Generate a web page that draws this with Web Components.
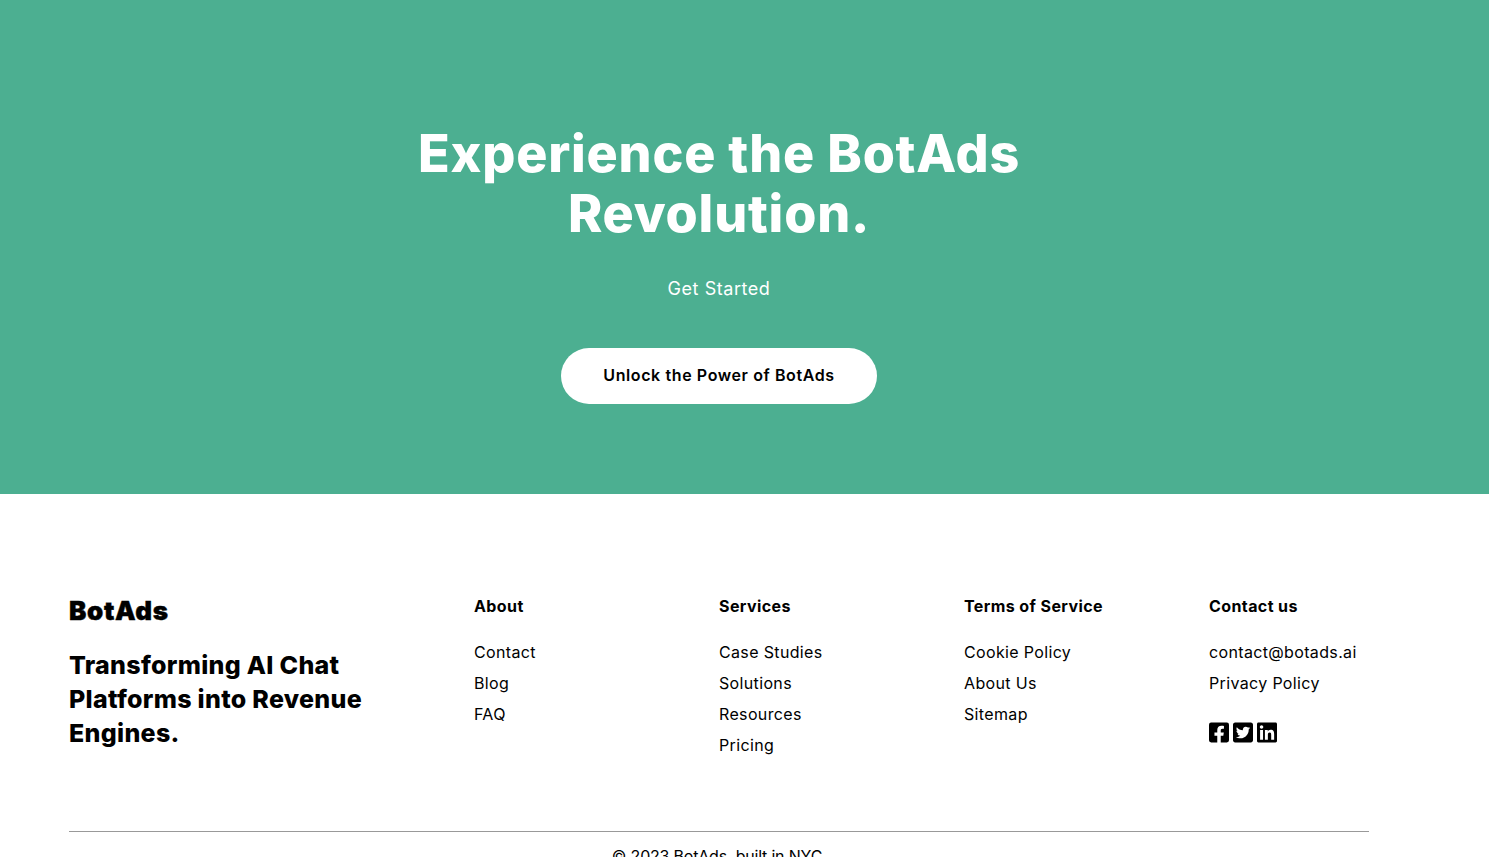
<!DOCTYPE html>
<html>
<head>
<meta charset="utf-8">
<title>BotAds</title>
<style>
html,body{margin:0;padding:0;background:#fff}
body{font-family:Inter,"Liberation Sans",sans-serif;color:#000}
footer-column a{display:block;height:31px;line-height:31px;color:#000;text-decoration:none;letter-spacing:.35px}
</style>
</head>
<body>
<bot-hero heading="Experience the BotAds Revolution." sub="Get Started" cta="Unlock the Power of BotAds"></bot-hero>
<bot-footer>
  <footer-column title="About">
    <a>Contact</a><a>Blog</a><a>FAQ</a>
  </footer-column>
  <footer-column title="Services">
    <a>Case Studies</a><a>Solutions</a><a>Resources</a><a>Pricing</a>
  </footer-column>
  <footer-column title="Terms of Service">
    <a>Cookie Policy</a><a>About Us</a><a>Sitemap</a>
  </footer-column>
  <footer-column title="Contact us">
    <a>contact@botads.ai</a><a>Privacy Policy</a>
    <social-icons></social-icons>
  </footer-column>
</bot-footer>
<script>
const heroTemplate = document.createElement('template');
heroTemplate.innerHTML = `
  <style>
  :host{display:block;background:#4caf91;color:#fff;padding:124px 0 90px;text-align:center}
  .inner{width:1300px;margin-left:69px}
  h1{margin:0 auto;width:700px;font-size:52px;line-height:60px;font-weight:800;letter-spacing:.8px}
  p{margin:33px 0 0;font-size:18px;line-height:24px;letter-spacing:.55px}
  button{display:block;margin:47px auto 0;width:316px;height:56px;border:0;border-radius:28px;background:#fff;color:#000;font:600 16px Inter,sans-serif;letter-spacing:.6px;padding:0 0 2px}
  </style>
  <div class="inner">
    <h1></h1>
    <p></p>
    <button type="button"></button>
  </div>`;
class BotHero extends HTMLElement {
  constructor() {
    super();
    this.attachShadow({ mode: 'open' });
    this.shadowRoot.append(heroTemplate.content.cloneNode(true));
  }
  connectedCallback() {
    this.shadowRoot.querySelector('h1').textContent = this.getAttribute('heading');
    this.shadowRoot.querySelector('p').textContent = this.getAttribute('sub');
    this.shadowRoot.querySelector('button').textContent = this.getAttribute('cta');
  }
}
customElements.define('bot-hero', BotHero);

const footerTemplate = document.createElement('template');
footerTemplate.innerHTML = `
  <style>
  :host{display:block;padding:100px 0 0 69px;width:1420px;box-sizing:border-box}
  .top{display:grid;grid-template-columns:405px repeat(4,245px);height:237px}
  .logo{font-size:26px;line-height:34px;font-weight:900;margin:0;letter-spacing:.7px;-webkit-text-stroke:.4px #000}
  .tag{margin:20px 0 0;width:330px;font-size:25px;line-height:34px;font-weight:800;letter-spacing:.3px}
  .links{display:contents}
  .rule{width:1300px;height:1px;background:#999}
  .copy{width:1296px;text-align:center;font-size:16px;line-height:22px;margin-top:13px;letter-spacing:-.2px}
  </style>
  <div class="top">
    <div>
      <div class="logo">BotAds</div>
      <div class="tag">Transforming AI Chat Platforms into Revenue Engines.</div>
    </div>
    <div class="links"><slot></slot></div>
  </div>
  <div class="rule"></div>
  <div class="copy">© 2023 BotAds, built in NYC</div>`;
class BotFooter extends HTMLElement {
  constructor() {
    super();
    this.attachShadow({ mode: 'open' });
    this.shadowRoot.append(footerTemplate.content.cloneNode(true));
  }
}
customElements.define('bot-footer', BotFooter);

const columnTemplate = document.createElement('template');
columnTemplate.innerHTML = `
  <style>
  :host{display:block;font-size:16px}
  h5{margin:0 0 19px;font-size:16px;line-height:24px;font-weight:700;letter-spacing:.4px}
  </style>
  <h5></h5>
  <slot></slot>`;
class FooterColumn extends HTMLElement {
  constructor() {
    super();
    this.attachShadow({ mode: 'open' });
    this.shadowRoot.append(columnTemplate.content.cloneNode(true));
  }
  connectedCallback() {
    this.shadowRoot.querySelector('h5').textContent = this.getAttribute('title');
  }
}
customElements.define('footer-column', FooterColumn);

const socialTemplate = document.createElement('template');
socialTemplate.innerHTML = `
  <style>
  :host{display:flex;gap:4px;margin-top:22px}
  svg{width:20px;height:23px;fill:#000;display:block}
  </style>
  <svg viewBox="0 0 448 512"><path d="M400 32H48A48 48 0 0 0 0 80v352a48 48 0 0 0 48 48h137.25V327.69h-63V256h63v-54.64c0-62.15 37-96.48 93.67-96.48 27.14 0 55.52 4.84 55.52 4.84v61h-31.27c-30.81 0-40.42 19.12-40.42 38.73V256h68.78l-11 71.69h-57.78V480H400a48 48 0 0 0 48-48V80a48 48 0 0 0-48-48z"/></svg>
  <svg viewBox="0 0 448 512"><path d="M400 32H48C21.5 32 0 53.5 0 80v352c0 26.5 21.5 48 48 48h352c26.5 0 48-21.5 48-48V80c0-26.5-21.5-48-48-48zm-48.9 158.8c.2 2.8.2 5.7.2 8.5 0 86.7-66 186.6-186.6 186.6-37.2 0-71.7-10.8-100.7-29.4 5.3.6 10.4.8 15.8.8 30.7 0 58.9-10.4 81.4-28-28.8-.6-53-19.5-61.3-45.5 10.1 1.5 19.2 1.5 29.6-1.2-30-6.1-52.5-32.5-52.5-64.4v-.8c8.7 4.9 18.9 7.9 29.6 8.3a65.447 65.447 0 0 1-29.2-54.6c0-12.2 3.2-23.4 8.9-33.1 32.3 39.8 80.8 65.8 135.2 68.6-9.3-44.5 24-80.6 64-80.6 18.9 0 35.9 7.9 47.9 20.7 14.8-2.8 29-8.3 41.6-15.8-4.9 15.2-15.1 28-28.6 36 13.1-1.4 25.8-5 37.6-10.1-8.9 13.1-20.1 24.7-32.9 34z"/></svg>
  <svg viewBox="0 0 448 512"><path d="M416 32H31.9C14.3 32 0 46.5 0 64.3v383.4C0 465.5 14.3 480 31.9 480H416c17.6 0 32-14.5 32-32.3V64.3c0-17.8-14.4-32.3-32-32.3zM135.4 416H69V202.2h66.5V416zm-33.2-243c-21.3 0-38.5-17.3-38.5-38.5S80.9 96 102.2 96c21.2 0 38.5 17.3 38.5 38.5 0 21.3-17.2 38.5-38.5 38.5zm282.1 243h-66.4V312c0-24.8-.5-56.7-34.5-56.7-34.6 0-39.9 27-39.9 54.9V416h-66.4V202.2h63.7v29.2h.9c8.9-16.8 30.6-34.5 62.9-34.5 67.2 0 79.7 44.3 79.7 101.9V416z"/></svg>`;
class SocialIcons extends HTMLElement {
  constructor() {
    super();
    this.attachShadow({ mode: 'open' });
    this.shadowRoot.append(socialTemplate.content.cloneNode(true));
  }
}
customElements.define('social-icons', SocialIcons);
</script>
</body>
</html>
